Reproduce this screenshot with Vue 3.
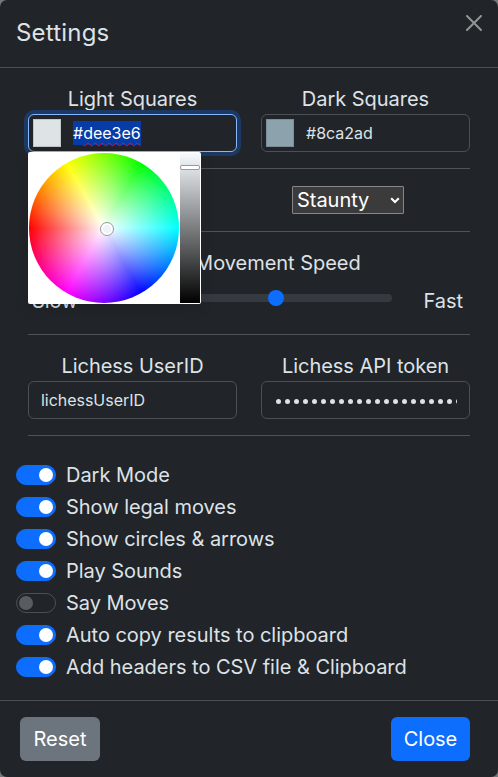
<script setup>
import { ref } from 'vue'

const light = ref('#dee3e6')
const dark = ref('#8ca2ad')
const options = ref([
  { label: 'Dark Mode', on: true },
  { label: 'Show legal moves', on: true },
  { label: 'Show circles & arrows', on: true },
  { label: 'Play Sounds', on: true },
  { label: 'Say Moves', on: false },
  { label: 'Auto copy results to clipboard', on: true },
  { label: 'Add headers to CSV file & Clipboard', on: true }
])
</script>

<template>
  <div class="modal">
    <header class="modal-header">
      <h5 class="title">Settings</h5>
      <button class="dismiss" aria-label="Dismiss">
        <svg viewBox="0 0 16 16" width="16" height="16">
          <path d="M1 1 15 15M15 1 1 15" fill="none" stroke="#929495" stroke-width="2" stroke-linecap="round" />
        </svg>
      </button>
    </header>

    <main class="modal-body">
      <section class="pair">
        <div class="field">
          <label>Light Squares</label>
          <div class="control color focused">
            <span class="swatch light"></span>
            <span class="selected">#<span class="misspelt">{{ light.slice(1) }}</span></span>
            <div class="picker">
              <div class="wheel"><span class="wheel-handle"></span></div>
              <div class="value-bar"><span class="value-handle"></span></div>
            </div>
          </div>
        </div>
        <div class="field">
          <label>Dark Squares</label>
          <div class="control color">
            <span class="swatch dark"></span>
            <span>{{ dark }}</span>
          </div>
        </div>
      </section>
      <hr />
      <section class="pair theme">
        <label>Pieces</label>
        <div class="select">
          <span>Staunty</span>
          <svg viewBox="0 0 10 7" width="10" height="7">
            <path d="M1.2 1.2 5 5 8.8 1.2" fill="none" stroke="#fff" stroke-width="2" />
          </svg>
        </div>
      </section>
      <hr />
      <section class="speed">
        <label>Piece Movement Speed</label>
        <div class="speed-row">
          <span class="slow">Slow</span>
          <div class="track"><span class="thumb"></span></div>
          <span class="fast">Fast</span>
        </div>
      </section>
      <hr />
      <section class="pair">
        <div class="field">
          <label>Lichess UserID</label>
          <div class="control">lichessUserID</div>
        </div>
        <div class="field">
          <label>Lichess API token</label>
          <div class="control">
            <div class="dots"><i v-for="n in 21" :key="n"></i></div>
          </div>
        </div>
      </section>
      <hr />
    </main>

    <ul class="switches">
      <li v-for="o in options" :key="o.label" @click="o.on = !o.on">
        <span class="switch" :class="{ on: o.on }"><i></i></span>
        <span>{{ o.label }}</span>
      </li>
    </ul>

    <footer class="modal-footer">
      <button class="btn reset">Reset</button>
      <button class="btn close">Close</button>
    </footer>
  </div>
</template>

<style>
body {
  margin: 0;
  background: #737879;
}
</style>

<style scoped>
* {
  box-sizing: border-box;
}
.modal {
  width: 498px;
  height: 777px;
  display: flex;
  flex-direction: column;
  background: #212529;
  color: #dee2e6;
  border-radius: 7px;
  overflow: hidden;
  font: 400 20px/30px Inter, "Liberation Sans", sans-serif;
  letter-spacing: -0.03px;
  white-space: nowrap;
}
.modal-header {
  height: 68px;
  display: flex;
  justify-content: space-between;
  align-items: flex-start;
  padding: 14px 16px 0;
  border-bottom: 1px solid #495057;
}
.title {
  margin: 1px 0 0;
  font-size: 24px;
  line-height: 36px;
  font-weight: 400;
  letter-spacing: 0.2px;
}
button {
  font: inherit;
  letter-spacing: inherit;
  border: 0;
  padding: 0;
}
.dismiss {
  display: flex;
  width: 16px;
  height: 16px;
  margin-top: 1px;
  background: none;
}
.modal-body {
  padding: 16px 28px 0;
}
.pair {
  display: grid;
  grid-template-columns: 209px 209px;
  column-gap: 24px;
}
.field {
  display: flex;
  flex-direction: column;
  text-align: center;
}
.control {
  position: relative;
  display: flex;
  align-items: center;
  height: 38px;
  padding: 0 12px;
  border: 1px solid #495057;
  border-radius: 6px;
  font-size: 16px;
  line-height: 24px;
}
.color {
  gap: 12px;
  padding-left: 4px;
  letter-spacing: 0;
}
.focused {
  border-color: #86b7fe;
  box-shadow: 0 0 0 4px #1c3963;
}
.swatch {
  width: 28px;
  height: 28px;
  border: 1px solid rgba(0, 0, 0, 0.12);
}
.light {
  background: #dee3e6;
}
.dark {
  background: #8ca2ad;
}
.selected {
  background: #063ca8;
  color: #fff;
}
.misspelt {
  text-decoration: underline wavy #e0102c 1px;
  text-underline-offset: 3px;
  text-decoration-skip-ink: none;
}
.picker {
  position: absolute;
  z-index: 2;
  left: -1px;
  top: 37px;
  width: 173px;
  height: 152px;
  display: flex;
  gap: 1px;
  padding: 1px;
  background: #fff;
  border-radius: 2px;
  box-shadow: 0 4px 14px rgba(0, 0, 0, 0.15);
}
.wheel {
  position: relative;
  width: 150px;
  height: 150px;
  border-radius: 50%;
  background:
    radial-gradient(closest-side, #fff, rgba(255, 255, 255, 0)),
    conic-gradient(from 30deg, #0f0, #0ff, #00f, #f0f, #f00, #ff0, #0f0);
}
.wheel-handle {
  position: absolute;
  left: 71px;
  top: 69px;
  width: 14px;
  height: 14px;
  border: 1px solid #999;
  border-radius: 50%;
  background: #edf3f8;
  box-shadow: inset 0 0 0 2px #fff;
}
.value-bar {
  position: relative;
  width: 20px;
  height: 150px;
  background: linear-gradient(#f6fbff, #000);
}
.value-handle {
  position: absolute;
  left: 0;
  top: 12px;
  width: 20px;
  height: 5px;
  border: 1px solid #999;
  border-radius: 2px;
  background: #fff;
}
hr {
  height: 1px;
  margin: 16px 0;
  border: 0;
  background: #4f5357;
}
.theme {
  height: 30px;
  text-align: center;
}
.select {
  display: flex;
  align-items: center;
  justify-content: space-between;
  width: 112px;
  height: 28px;
  margin: 1px 0 0 31px;
  padding: 0 3px 0 4px;
  background: #3b3b3b;
  border: 1px solid #858585;
  border-radius: 1px;
  color: #fff;
}
.speed {
  height: 70px;
  text-align: center;
}
.speed label {
  display: block;
}
.speed-row {
  display: flex;
  align-items: center;
  height: 40px;
  padding: 6px 7px 0 4px;
}
.slow {
  width: 128px;
  text-align: left;
}
.track {
  display: flex;
  align-items: center;
  justify-content: center;
  width: 232px;
  height: 8px;
  margin-bottom: 6px;
  border-radius: 8px;
  background: #343a40;
}
.thumb {
  width: 16px;
  height: 16px;
  border-radius: 50%;
  background: #0d6efd;
}
.fast {
  margin-left: auto;
}
.dots {
  display: flex;
  gap: 4px;
  width: 183px;
  padding: 2px 0 0 2px;
  overflow: hidden;
}
.dots i {
  flex: none;
  width: 5px;
  height: 5px;
  border-radius: 50%;
  background: #dee2e6;
}
.switches {
  display: flex;
  flex-direction: column;
  gap: 2px;
  margin: 8px 0 0;
  padding: 0 16px;
  list-style: none;
}
.switches li {
  display: flex;
  align-items: center;
  gap: 10px;
}
.switch {
  display: flex;
  align-items: center;
  width: 40px;
  height: 20px;
  padding: 0 2px;
  border: 1px solid #495057;
  border-radius: 10px;
}
.switch i {
  width: 14px;
  height: 14px;
  border-radius: 50%;
  background: #595c5f;
}
.switch.on {
  justify-content: flex-end;
  background: #0d6efd;
  border-color: #0d6efd;
}
.switch.on i {
  background: #fff;
}
.modal-footer {
  display: flex;
  justify-content: space-between;
  height: 77px;
  margin-top: auto;
  padding: 16px 28px 0 20px;
  border-top: 1px solid #495057;
}
.btn {
  height: 44px;
  border-radius: 6px;
  color: #fff;
}
.reset {
  width: 80px;
  background: #6c757d;
}
.close {
  width: 79px;
  background: #0d6efd;
}
</style>
